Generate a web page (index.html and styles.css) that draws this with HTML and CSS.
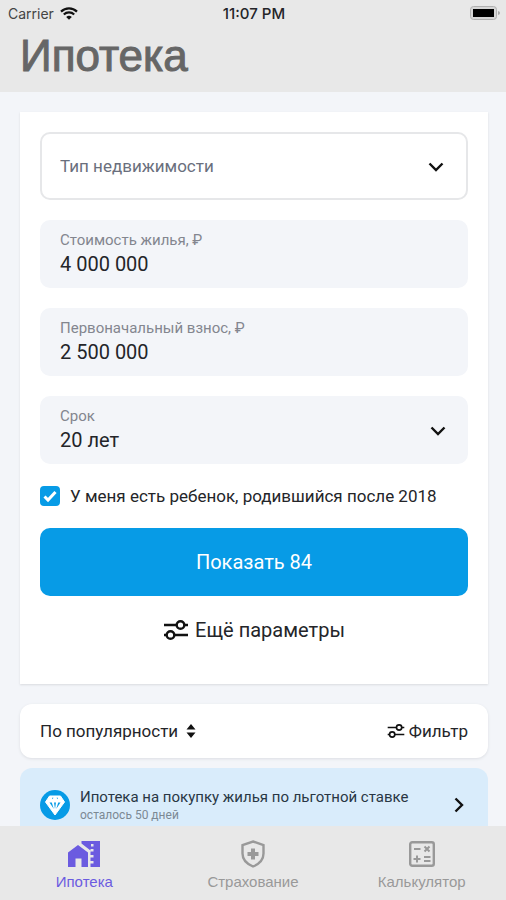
FILE: index.html
```html
<!DOCTYPE html>
<html lang="ru">
<head>
  <meta charset="utf-8">
  <meta name="viewport" content="width=device-width, initial-scale=1">
  <title>Ипотека</title>
  <link rel="stylesheet" href="styles.css">
</head>
<body>
  <header class="header">
    <div class="status">
      <div class="status-carrier">
        <span>Carrier</span>
        <svg class="wifi" viewBox="0 0 18 13" aria-hidden="true">
          <path d="M1 4.6a11.5 11.5 0 0 1 16 0M3.8 7.5a7.5 7.5 0 0 1 10.4 0" fill="none" stroke="#111" stroke-width="2.2"/>
          <path d="M6.2 10a4 4 0 0 1 5.6 0L9 12.8z" fill="#111"/>
        </svg>
      </div>
      <time class="status-time">11:07 PM</time>
      <svg class="battery" viewBox="0 0 30 14" aria-hidden="true">
        <rect x="0.5" y="0.5" width="26" height="13" rx="3" fill="#d6d6d6" stroke="#b0b0b0"/>
        <rect x="3" y="3" width="21" height="8" fill="#000"/>
        <path d="M28 5v4q2-.5 2-2t-2-2z" fill="#a8a8a8"/>
      </svg>
    </div>
    <h1 class="title">Ипотека</h1>
  </header>

  <main class="content">
    <form class="card">
      <div class="field field-outlined">
        <select class="control" id="type" aria-label="Тип недвижимости">
          <option>Тип недвижимости</option>
        </select>
        <svg class="chevron" viewBox="0 0 16 10" aria-hidden="true"><path d="M1.5 1.5L8 8l6.5-6.5"/></svg>
      </div>
      <div class="field">
        <label class="label" for="price">Стоимость жилья, ₽</label>
        <input class="control" id="price" type="text" inputmode="numeric" value="4 000 000">
      </div>
      <div class="field">
        <label class="label" for="deposit">Первоначальный взнос, ₽</label>
        <input class="control" id="deposit" type="text" inputmode="numeric" value="2 500 000">
      </div>
      <div class="field">
        <label class="label" for="term">Срок</label>
        <select class="control" id="term">
          <option>20 лет</option>
        </select>
        <svg class="chevron" viewBox="0 0 16 10" aria-hidden="true"><path d="M1.5 1.5L8 8l6.5-6.5"/></svg>
      </div>
      <label class="check" for="child">
        <span class="check-mark">
          <input class="check-input" id="child" type="checkbox" checked>
          <svg class="check-icon" viewBox="0 0 20 20" aria-hidden="true"><path d="M4.5 10.5l3.5 3.5 7.5-8"/></svg>
        </span>
        <span>У меня есть ребенок, родившийся после 2018</span>
      </label>
      <button class="submit" type="submit">Показать 84</button>
      <button class="more" type="button">
        <svg class="sliders" viewBox="0 0 26 20" aria-hidden="true">
          <path d="M1 5h12M21 5h4"/><circle cx="17.5" cy="5" r="3.8"/>
          <path d="M1 15h2M11 15h14"/><circle cx="7.5" cy="15" r="3.8"/>
        </svg>
        <span>Ещё параметры</span>
      </button>
    </form>

    <div class="toolbar">
      <button class="tool" type="button">
        <span>По популярности</span>
        <svg class="sort" viewBox="0 0 10 14" aria-hidden="true"><path d="M5 0l4.5 5.5h-9zM5 14L.5 8.5h9z"/></svg>
      </button>
      <button class="tool tool-filter" type="button">
        <svg class="sliders sliders-small" viewBox="0 0 26 20" aria-hidden="true">
          <path d="M1 5h12M21 5h4"/><circle cx="17.5" cy="5" r="3.8"/>
          <path d="M1 15h2M11 15h14"/><circle cx="7.5" cy="15" r="3.8"/>
        </svg>
        <span>Фильтр</span>
      </button>
    </div>

    <a class="promo" href="#offer">
      <svg class="gem" viewBox="0 0 30 30" aria-hidden="true">
        <circle cx="15" cy="15" r="15" fill="#079be6"/>
        <path d="M9.5 6h11l4 6L15 25 5.5 12z" fill="#fff" stroke="#fff" stroke-linejoin="round"/>
        <path d="M9.5 12.5h2.300l2 6.500zM20.500 12.500h-2.300l-2 6.500zM14 12.500h2L15 19zM12 7.800h1.500l-1 1.500zM18 7.800h-1.500l1 1.500z" fill="#079be6"/>
      </svg>
      <span class="promo-text">
        <span class="promo-title">Ипотека на покупку жилья по льготной ставке</span>
        <span class="promo-note">осталось 50 дней</span>
      </span>
      <svg class="arrow" viewBox="0 0 10 16" aria-hidden="true"><path d="M1.5 1.5L8 8l-6.5 6.5"/></svg>
    </a>
  </main>

  <nav class="tabs">
    <a class="tab tab-active" href="#mortgage">
      <svg class="tab-icon tab-icon-wide" viewBox="0 0 32 28" aria-hidden="true">
        <path d="M0 12.5l10-7.500 10 7.500V27h-6.500v-8.500h-6V27H0z"/>
        <path d="M13.500 1H32v26h-9.500v-3.500h3V21h-3v-3.500h3V15h-3v-3.500h3V9h-3v1.500l-9-7zM23 4v2.500h2.500V4z" fill-rule="evenodd"/>
      </svg>
      <span>Ипотека</span>
    </a>
    <a class="tab" href="#insurance">
      <svg class="tab-icon" viewBox="0 0 26 28" aria-hidden="true">
        <path d="M13 1.500L23.500 5v8.500c0 6.500-4.500 10.500-10.500 13-6-2.500-10.500-6.500-10.500-13V5z" fill="none" stroke="currentColor" stroke-width="2.4"/>
        <path d="M11 8.500h4V12h3.500v4H15v3.500h-4V16H7.500v-4H11z"/>
      </svg>
      <span>Страхование</span>
    </a>
    <a class="tab" href="#calculator">
      <svg class="tab-icon" viewBox="0 0 26 28" aria-hidden="true">
        <rect x="1.2" y="2.2" width="23.6" height="23.6" rx="2" fill="none" stroke="currentColor" stroke-width="2.4"/>
        <path d="M5 9h6.500M15.500 6.500l5 5M20.500 6.500l-5 5M4.500 19h7M8 15.500v7M15 17h6.500M15 21h6.500" fill="none" stroke="currentColor" stroke-width="2"/>
      </svg>
      <span>Калькулятор</span>
    </a>
  </nav>
</body>
</html>
```
FILE: styles.css
```css
* {
  box-sizing: border-box;
}

body {
  display: flex;
  flex-direction: column;
  height: 100vh;
  margin: 0;
  background: #f3f5f9;
  color: #242529;
  font-family: Roboto, "Liberation Sans", sans-serif;
  font-size: 17px;
}

button,
input,
select {
  margin: 0;
  padding: 0;
  border: 0;
  background: none;
  color: inherit;
  font: inherit;
}

a {
  color: inherit;
  text-decoration: none;
}

svg {
  display: block;
  flex: none;
}

.header {
  flex: none;
  padding-bottom: 12px;
  background: #e8e8e8;
}

.status {
  display: grid;
  grid-template-columns: 1fr auto 1fr;
  align-items: center;
  height: 26px;
  padding: 0 6px 0 8px;
  font-family: Inter, "Liberation Sans", sans-serif;
  font-size: 14px;
}

.status-carrier {
  display: flex;
  align-items: center;
  gap: 6px;
  color: #444;
}

.status-time {
  font-size: 15px;
  font-weight: 500;
}

.wifi {
  width: 18px;
  height: 13px;
}

.battery {
  justify-self: end;
  width: 30px;
  height: 14px;
}

.title {
  margin: 0;
  padding: 6px 20px 0;
  color: #666;
  font-family: "Liberation Sans", sans-serif;
  font-size: 44px;
  font-weight: 400;
  line-height: 48px;
  -webkit-text-stroke: 1px #666;
}

.content {
  display: flex;
  flex: 1;
  flex-direction: column;
  min-height: 0;
  padding: 20px 18px 20px 20px;
  overflow-y: auto;
  scrollbar-width: none;
}

.card {
  display: flex;
  flex: none;
  flex-direction: column;
  gap: 20px;
  margin-bottom: 20px;
  padding: 20px 20px 40px;
  background: #fff;
  box-shadow: 0 1px 2px #d9dbdf;
}

.field {
  display: flex;
  position: relative;
  flex-direction: column;
  justify-content: center;
  height: 68px;
  padding: 0 20px;
  border-radius: 10px;
  background: #f3f5f9;
}

.field-outlined {
  padding: 0 18px;
  border: 2px solid #e6e7e9;
  background: #fff;
  color: #6a6f7d;
}

.label {
  color: #83868f;
  font-size: 15px;
  line-height: 20px;
}

.control {
  width: 100%;
  height: 28px;
  appearance: none;
  font-size: 20px;
}

.field-outlined .control {
  font-size: 17px;
}

.chevron {
  position: absolute;
  top: calc(50% - 4px);
  right: 22px;
  width: 16px;
  height: 10px;
  pointer-events: none;
}

.chevron path,
.arrow path {
  fill: none;
  stroke: #111;
  stroke-width: 2.4;
}

.check {
  display: flex;
  align-items: center;
  gap: 10px;
  height: 24px;
  white-space: nowrap;
}

.check-mark {
  display: grid;
}

.check-input,
.check-icon {
  grid-area: 1 / 1;
  width: 20px;
  height: 20px;
}

.check-input {
  appearance: none;
  border: 2px solid #079be6;
  border-radius: 4px;
}

.check-input:checked {
  background: #079be6;
}

.check-icon {
  fill: none;
  stroke: #fff;
  stroke-width: 3;
  pointer-events: none;
}

.submit {
  height: 68px;
  border-radius: 10px;
  background: #079be6;
  color: #fff;
  font-size: 20px;
}

.more {
  display: flex;
  align-items: center;
  justify-content: center;
  gap: 6px;
  height: 28px;
  font-size: 20px;
}

.sliders {
  width: 26px;
  height: 20px;
  fill: none;
  stroke: #111;
  stroke-width: 2.4;
}

.sliders-small {
  width: 18px;
  height: 14px;
}

.toolbar {
  display: flex;
  flex: none;
  align-items: center;
  justify-content: space-between;
  height: 54px;
  margin-bottom: 10px;
  padding: 0 20px;
  border-radius: 12px;
  background: #fff;
  box-shadow: 0 1px 3px #dcdee3;
}

.tool {
  display: flex;
  align-items: center;
  gap: 8px;
}

.tool-filter {
  gap: 4px;
}

.sort {
  width: 10px;
  height: 14px;
  fill: #111;
}

.promo {
  display: flex;
  flex: none;
  align-items: center;
  gap: 10px;
  height: 74px;
  padding: 0 24px 0 20px;
  border-radius: 12px;
  background: #d9ecfb;
}

.gem {
  width: 30px;
  height: 30px;
}

.promo-text {
  display: flex;
  flex: 1;
  flex-direction: column;
  white-space: nowrap;
}

.promo-title {
  color: #293744;
  font-size: 15px;
  line-height: 20px;
}

.promo-note {
  color: #7c8994;
  font-size: 12px;
  line-height: 16px;
}

.arrow {
  width: 10px;
  height: 16px;
}

.tabs {
  display: grid;
  flex: none;
  grid-template-columns: repeat(3, 1fr);
  height: 74px;
  background: #e8e8e8;
}

.tab {
  display: flex;
  flex-direction: column;
  align-items: center;
  gap: 6px;
  padding-top: 14px;
  color: #999;
  font-family: "Liberation Sans", sans-serif;
  font-size: 15px;
  line-height: 16px;
}

.tab-active {
  color: #6b5be0;
}

.tab-icon {
  width: 26px;
  height: 28px;
  fill: currentColor;
}

.tab-icon-wide {
  width: 32px;
}
```
